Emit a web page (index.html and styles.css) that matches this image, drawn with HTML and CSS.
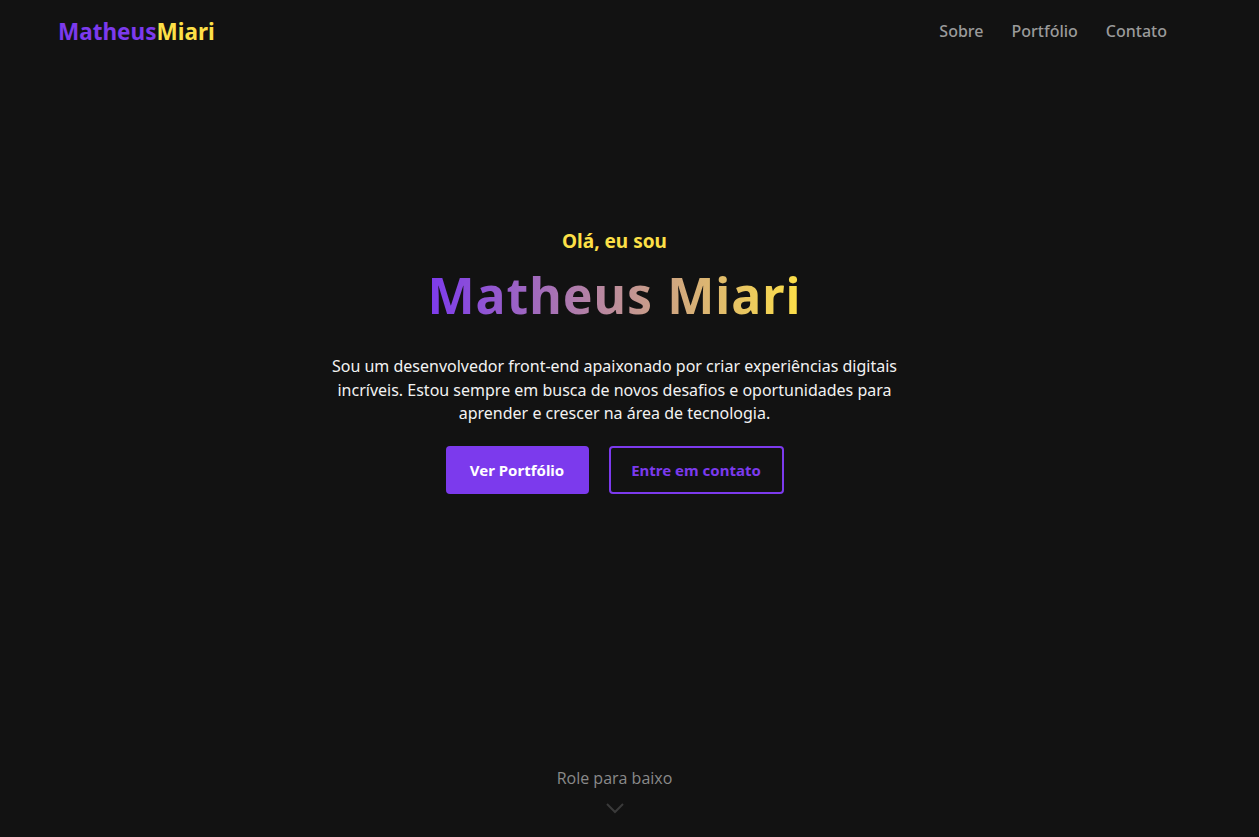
FILE: index.html
```html
<!DOCTYPE html>
<html lang="pt-BR">
<head>
<meta charset="utf-8">
<title>Matheus Miari</title>
<link rel="stylesheet" href="styles.css">
</head>
<body>
<div class="page">
  <header class="header">
    <a class="logo" href="#"><span class="logo-a">Matheus</span><span class="logo-b">Miari</span></a>
    <nav class="nav">
      <a href="#">Sobre</a>
      <a href="#">Portfólio</a>
      <a href="#">Contato</a>
    </nav>
  </header>
  <main class="hero">
    <p class="hello">Olá, eu sou</p>
    <h1 class="name">Matheus Miari</h1>
    <p class="intro">Sou um desenvolvedor front-end apaixonado por criar experiências digitais incríveis. Estou sempre em busca de novos desafios e oportunidades para aprender e crescer na área de tecnologia.</p>
    <div class="actions">
      <a class="btn btn-primary" href="#">Ver Portfólio</a>
      <a class="btn btn-outline" href="#">Entre em contato</a>
    </div>
  </main>
  <footer class="scroll">
    <span>Role para baixo</span>
    <svg class="chev" width="20" height="12" viewBox="0 0 20 12"><path d="M2 2 L10 10 L18 2" fill="none" stroke="#3a3a3a" stroke-width="2"/></svg>
  </footer>
</div>
</body>
</html>
```
FILE: styles.css
```css
* { box-sizing: border-box; margin: 0; padding: 0; }
html, body { height: 100%; }
body {
  background: #121212;
  color: #fff;
  font-family: "Noto Sans", "DejaVu Sans", sans-serif;
}
a { text-decoration: none; }
.page {
  width: 1229px;
  height: 837px;
  display: flex;
  flex-direction: column;
}
.header {
  height: 62px;
  display: flex;
  align-items: center;
  justify-content: space-between;
  padding: 0 62px 0 58px;
}
.logo { font-size: 22.5px; font-weight: 700; }
.logo-a { color: #7c3aed; }
.logo-b { color: #fde047; }
.nav { display: flex; gap: 28px; }
.nav a { color: #9a9a9a; font-size: 16px; font-weight: 500; }
.hero {
  flex: 1;
  display: flex;
  flex-direction: column;
  align-items: center;
  text-align: center;
  padding-top: 166px;
}
.hello { color: #fde047; font-size: 19px; font-weight: 700; line-height: 26px; }
.name {
  font-size: 50px;
  font-weight: 700;
  line-height: 66px;
  margin-top: 8px;
  letter-spacing: 1px;
  background: linear-gradient(90deg, #7c3aed, #fde047);
  -webkit-background-clip: text;
  background-clip: text;
  color: transparent;
}
.intro {
  max-width: 580px;
  font-size: 16px;
  line-height: 23.5px;
  margin-top: 27px;
  color: #f2f2f2;
}
.actions { display: flex; gap: 20px; margin-top: 20px; }
.btn {
  display: flex;
  align-items: center;
  justify-content: center;
  height: 48px;
  border-radius: 4px;
  font-size: 15px;
  font-weight: 700;
}
.btn-primary { width: 143px; background: #7c3aed; color: #fff; }
.btn-outline { width: 175px; border: 2px solid #7c3aed; color: #7c3aed; }
.scroll {
  display: flex;
  flex-direction: column;
  align-items: center;
  gap: 13px;
  padding-bottom: 23px;
  font-family: "Open Sans", sans-serif;
  color: #8a8a8a;
  font-size: 16px;
}
```
